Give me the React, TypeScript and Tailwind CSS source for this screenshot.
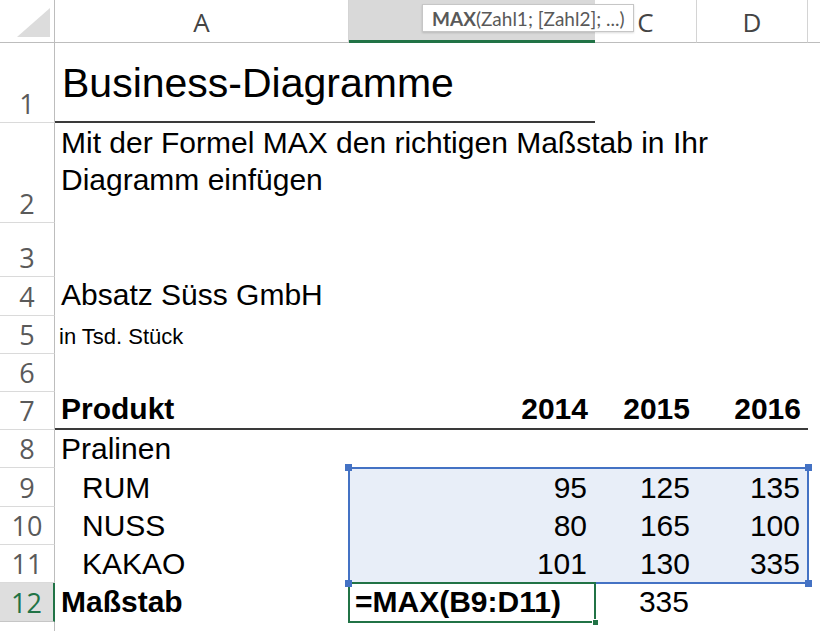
import React from "react";

const cellFont = "font-['Liberation_Sans',Arial,sans-serif] text-black";

function RowHead({ label, h, active = false }: { label: string; h: string; active?: boolean }) {
  return (
    <div
      className={`${h} w-[55px] shrink-0 flex items-end justify-center pb-[5px] font-['Open_Sans',sans-serif] font-normal text-[27px] leading-none border-b ${
        active
          ? "bg-[#dedede] text-[#217346] border-r-2 border-r-[#217346] border-b-[#c6c6c6]"
          : "bg-white text-[#5a5a5a] border-r border-r-[#bdbdbd] border-b-[#dadada]"
      }`}
    >
      {label}
    </div>
  );
}

export default function App() {
  return (
    <div className="relative w-[820px] h-[631px] overflow-hidden bg-white">
      {/* Column header row */}
      <div className="flex h-[43px]">
        <div className="w-[55px] shrink-0 relative bg-white border-r border-r-[#bdbdbd] border-b border-b-[#bdbdbd]">
          <svg className="absolute left-[17px] top-[8px]" width="34" height="30" viewBox="0 0 34 30">
            <polygon points="33,0 33,29 0,29" fill="#dcdcdc" />
          </svg>
        </div>
        <div className="w-[294px] shrink-0 flex items-end justify-center pb-[7px] font-['Open_Sans',sans-serif] text-[26px] leading-none text-[#444] border-r border-r-[#d4d4d4] border-b border-b-[#bdbdbd]">
          A
        </div>
        <div className="w-[246px] shrink-0 bg-[#d9d9d9] border-b-[3px] border-b-[#217346]" />
        <div className="w-[102px] shrink-0 flex items-end justify-center pb-[7px] font-['Open_Sans',sans-serif] text-[26px] leading-none text-[#444] border-r border-r-[#d4d4d4] border-b border-b-[#bdbdbd]">
          C
        </div>
        <div className="w-[111px] shrink-0 flex items-end justify-center pb-[7px] font-['Open_Sans',sans-serif] text-[26px] leading-none text-[#444] border-r border-r-[#d4d4d4] border-b border-b-[#bdbdbd]">
          D
        </div>
        <div className="flex-1 border-b border-b-[#bdbdbd]" />
      </div>

      {/* Row 1 */}
      <div className={`flex h-[80px] ${cellFont}`}>
        <RowHead label="1" h="h-[80px]" />
        <div className="w-[540px] shrink-0 flex items-center pl-[7px] pt-[2px] text-[41px] leading-none whitespace-nowrap border-b-2 border-b-[#3a3a3a]">
          Business-Diagramme
        </div>
        <div className="flex-1" />
      </div>

      {/* Row 2 */}
      <div className={`flex h-[100px] ${cellFont}`}>
        <RowHead label="2" h="h-[100px]" />
        <div className="w-[700px] shrink-0 pl-[6px] pt-[1px] text-[30px] leading-[37px]">
          <div className="whitespace-nowrap">Mit der Formel MAX den richtigen Maßstab in Ihr</div>
          <div className="whitespace-nowrap">Diagramm einfügen</div>
        </div>
      </div>

      {/* Row 3 */}
      <div className={`flex h-[54px] ${cellFont}`}>
        <RowHead label="3" h="h-[54px]" />
      </div>

      {/* Row 4 */}
      <div className={`flex h-[39px] ${cellFont}`}>
        <RowHead label="4" h="h-[39px]" />
        <div className="w-[294px] shrink-0 flex items-end pl-[6px] pb-[6px] text-[30px] leading-none whitespace-nowrap">
          Absatz Süss GmbH
        </div>
      </div>

      {/* Row 5 */}
      <div className={`flex h-[38px] ${cellFont}`}>
        <RowHead label="5" h="h-[38px]" />
        <div className="w-[294px] shrink-0 flex items-end pl-[4px] pb-[6px] text-[22px] leading-none whitespace-nowrap">
          in Tsd. Stück
        </div>
      </div>

      {/* Row 6 */}
      <div className={`flex h-[38px] ${cellFont}`}>
        <RowHead label="6" h="h-[38px]" />
      </div>

      {/* Row 7 */}
      <div className={`flex h-[38px] ${cellFont}`}>
        <RowHead label="7" h="h-[38px]" />
        <div className="w-[294px] shrink-0 flex items-end pl-[6px] pb-[4px] text-[30px] leading-none font-bold border-b-2 border-b-[#3a3a3a]">
          Produkt
        </div>
        <div className="w-[246px] shrink-0 flex items-end justify-end pr-[7px] pb-[4px] text-[30px] leading-none font-bold border-b-2 border-b-[#3a3a3a]">
          2014
        </div>
        <div className="w-[102px] shrink-0 flex items-end justify-end pr-[7px] pb-[4px] text-[30px] leading-none font-bold border-b-2 border-b-[#3a3a3a]">
          2015
        </div>
        <div className="w-[111px] shrink-0 flex items-end justify-end pr-[7px] pb-[4px] text-[30px] leading-none font-bold border-b-2 border-b-[#3a3a3a]">
          2016
        </div>
      </div>

      {/* Row 8 */}
      <div className={`flex h-[38px] ${cellFont}`}>
        <RowHead label="8" h="h-[38px]" />
        <div className="w-[294px] shrink-0 flex items-end pl-[6px] pb-[4px] text-[30px] leading-none">
          Pralinen
        </div>
      </div>

      {/* Rows 9-11 */}
      {[
        { l: "9", h: "h-[39px]", name: "RUM", v: ["95", "125", "135"] },
        { l: "10", h: "h-[38px]", name: "NUSS", v: ["80", "165", "100"] },
        { l: "11", h: "h-[38px]", name: "KAKAO", v: ["101", "130", "335"] },
      ].map((r) => (
        <div key={r.l} className={`flex ${r.h} ${cellFont}`}>
          <RowHead label={r.l} h={r.h} />
          <div className="w-[294px] shrink-0 flex items-end pl-[27px] pb-[4px] text-[30px] leading-none">
            {r.name}
          </div>
          <div className="w-[246px] shrink-0 flex items-end justify-end pr-[8px] pb-[4px] text-[30px] leading-none bg-[#e8eef8]">
            {r.v[0]}
          </div>
          <div className="w-[102px] shrink-0 flex items-end justify-end pr-[7px] pb-[4px] text-[30px] leading-none bg-[#e8eef8]">
            {r.v[1]}
          </div>
          <div className="w-[111px] shrink-0 flex items-end justify-end pr-[8px] pb-[4px] text-[30px] leading-none bg-[#e8eef8]">
            {r.v[2]}
          </div>
        </div>
      ))}

      {/* Row 12 */}
      <div className={`flex h-[39px] ${cellFont}`}>
        <RowHead label="12" h="h-[39px]" active />
        <div className="w-[294px] shrink-0 flex items-end pl-[6px] pb-[5px] text-[30px] leading-none font-bold">
          Maßstab
        </div>
        <div className="w-[246px] shrink-0 flex items-end pl-[6px] pb-[5px] text-[30px] leading-none font-bold whitespace-nowrap">
          =MAX(B9:D11)
        </div>
        <div className="w-[102px] shrink-0 flex items-end justify-end pr-[8px] pb-[5px] text-[30px] leading-none">
          335
        </div>
      </div>

      {/* Row 13 (cut off) */}
      <div className="flex h-[20px]">
        <div className="h-[20px] w-[55px] shrink-0 bg-white border-r border-r-[#bdbdbd]" />
      </div>

      {/* Selection range B9:D11 */}
      <div className="absolute left-[348px] top-[467px] w-[461px] h-[117px] border-2 border-[#4472c4] pointer-events-none" />
      <div className="absolute left-[345px] top-[464px] w-[7px] h-[7px] bg-[#4472c4]" />
      <div className="absolute left-[805px] top-[464px] w-[7px] h-[7px] bg-[#4472c4]" />
      <div className="absolute left-[805px] top-[580px] w-[7px] h-[7px] bg-[#4472c4]" />

      {/* Active cell B12 */}
      <div className="absolute left-[348px] top-[582px] w-[248px] h-[41px] border-2 border-[#217346] pointer-events-none" />
      <div className="absolute left-[345px] top-[580px] w-[7px] h-[7px] bg-[#4472c4]" />
      <div className="absolute left-[592px] top-[619px] w-[7px] h-[7px] bg-[#217346] border border-white" />

      {/* Tooltip */}
      <div className="absolute left-[422px] top-[4px] w-[212px] h-[28px] bg-white border border-[#c6c6c6] shadow-[0_1px_2px_rgba(0,0,0,0.15)] flex items-center pl-[9px] font-['Lato',sans-serif] text-[19px] leading-none text-[#595959] whitespace-nowrap">
        <span className="font-bold">MAX</span>
        <span>(Zahl1; [Zahl2]; ...)</span>
      </div>
    </div>
  );
}
